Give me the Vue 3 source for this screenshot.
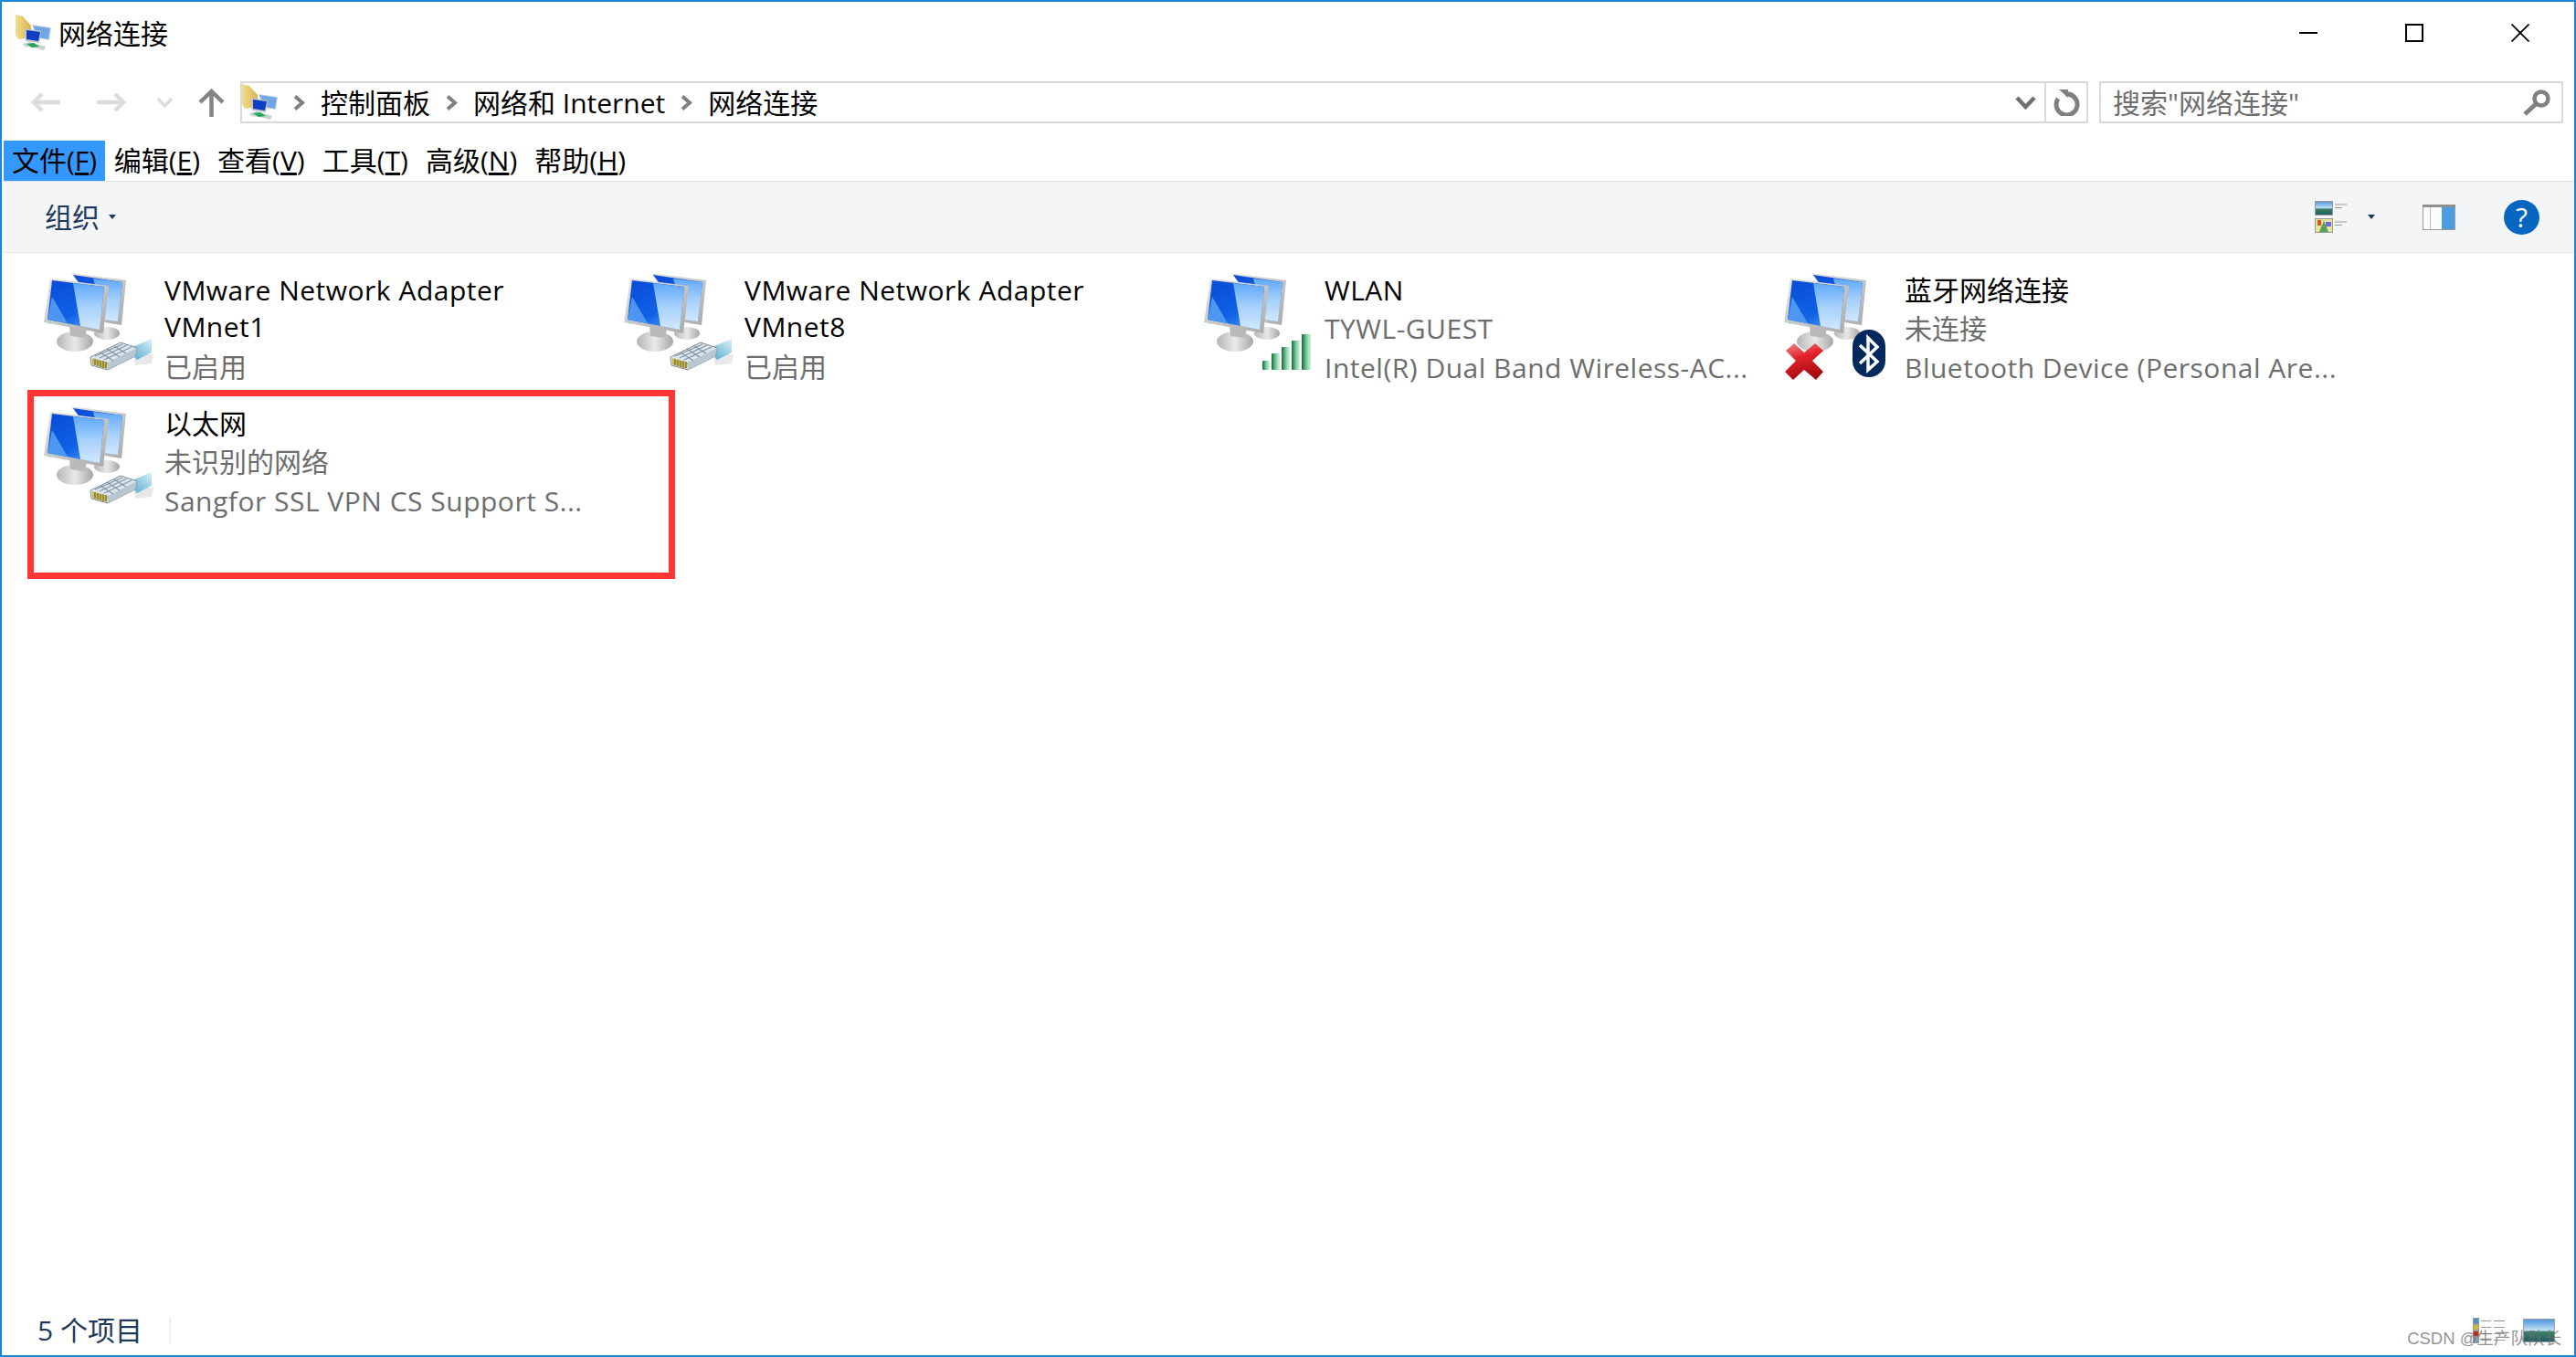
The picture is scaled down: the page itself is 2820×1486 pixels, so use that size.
<template>
  <div class="window">
    <!-- shared icon artwork -->
    <svg class="defs" width="0" height="0">
      <defs>
        <linearGradient id="screenBlue" x1="0" y1="0" x2="0.6" y2="1">
          <stop offset="0" stop-color="#0a4bd6" />
          <stop offset="0.7" stop-color="#0f62e6" />
          <stop offset="1" stop-color="#3f8ff0" />
        </linearGradient>
        <linearGradient id="glare" x1="0" y1="0" x2="0" y2="1">
          <stop offset="0" stop-color="#5fa8fb" />
          <stop offset="0.5" stop-color="#a5d0fb" />
          <stop offset="1" stop-color="#d2e8fd" />
        </linearGradient>
        <linearGradient id="frame" x1="0" y1="0" x2="1" y2="1">
          <stop offset="0" stop-color="#e6e6e6" />
          <stop offset="1" stop-color="#a9a9a9" />
        </linearGradient>
        <linearGradient id="base" x1="0" y1="0" x2="1" y2="0">
          <stop offset="0" stop-color="#b5b5b5" />
          <stop offset="0.5" stop-color="#e9e9e9" />
          <stop offset="1" stop-color="#a6a6a6" />
        </linearGradient>
        <linearGradient id="cable" x1="0" y1="1" x2="1" y2="0">
          <stop offset="0" stop-color="#4aa3c9" />
          <stop offset="1" stop-color="#d8f1fa" />
        </linearGradient>
        <linearGradient id="bar" x1="0" y1="0" x2="1" y2="0">
          <stop offset="0" stop-color="#116b37" />
          <stop offset="0.55" stop-color="#7fcf9d" />
          <stop offset="1" stop-color="#d7f2e0" />
        </linearGradient>
        <linearGradient id="cross" x1="0" y1="0" x2="0.3" y2="1">
          <stop offset="0" stop-color="#ec8a8a" />
          <stop offset="0.45" stop-color="#e3222a" />
          <stop offset="1" stop-color="#a80d12" />
        </linearGradient>
        <linearGradient id="folder" x1="0" y1="0" x2="1" y2="0">
          <stop offset="0" stop-color="#f4dc8c" />
          <stop offset="1" stop-color="#d8b454" />
        </linearGradient>
        <linearGradient id="sky" x1="0" y1="0" x2="0" y2="1">
          <stop offset="0" stop-color="#4b93df" />
          <stop offset="0.5" stop-color="#c5e3f6" />
          <stop offset="0.55" stop-color="#3f7d66" />
          <stop offset="1" stop-color="#1d5e63" />
        </linearGradient>
      </defs>

      <symbol id="monitors" viewBox="0 0 128 128">
        <ellipse cx="77" cy="75" rx="14" ry="7" fill="url(#base)" />
        <polygon points="38,9 98,17 93,66 80,64 75,63" fill="url(#frame)" />
        <polygon points="40,11 94,19 89,62 76,60" fill="url(#screenBlue)" />
        <polygon points="62,15 94,19 89,62 74,60" fill="url(#glare)" />
        <ellipse cx="42" cy="84" rx="20" ry="11" fill="url(#base)" />
        <polygon points="36,66 55,70 53,80 37,78" fill="#b9b9b9" />
        <polygon points="15,15 79,23 73,75 8,63" fill="url(#frame)" />
        <polygon points="17,17 74,24 69,71 12,60" fill="url(#screenBlue)" />
        <polygon points="40,20 74,24 69,71 48,67" fill="url(#glare)" />
        <polygon points="17,35 34,64 12,60" fill="#4d97f2" />
        <circle cx="14.500" cy="63.500" r="1" fill="#6fe08a" />
      </symbol>

      <symbol id="plug" viewBox="0 0 128 128">
        <polygon points="106,98 128,98 126,108 108,110" fill="#e8e8e8" />
        <polygon points="100,92 126,81 126,96 110,104" fill="url(#cable)" />
        <polygon points="59,101 92,85 110,91 108,100 78,115 60,110" fill="#dbe5ee" stroke="#7d8c98" stroke-width="1" />
        <polygon points="78,107 110,91 108,100 78,115" fill="#b9c7d3" />
        <path d="M64 100 L94 87 M69 102 L99 88 M74 104 L104 90 M70 96 L84 105 M77 92 L91 101 M85 89 L98 97" stroke="#8494a0" stroke-width="1.200" fill="none" />
        <polygon points="61,102 78,107 77,114 61,109" fill="#cdb84a" />
        <path d="M64 103 L64 110 M67 104 L67 111 M70 105 L70 112 M73 105 L73 113 M76 106 L76 113" stroke="#5f6244" stroke-width="1" />
      </symbol>

      <symbol id="bars" viewBox="0 0 128 128">
        <rect x="72" y="105" width="8" height="10" rx="1" fill="url(#bar)" />
        <rect x="82" y="97" width="9" height="18" rx="1" fill="url(#bar)" />
        <rect x="93" y="90" width="9" height="25" rx="1" fill="url(#bar)" />
        <rect x="104" y="83" width="9" height="32" rx="1" fill="url(#bar)" />
        <rect x="115" y="76" width="10" height="39" rx="1" fill="url(#bar)" />
      </symbol>

      <symbol id="bt" viewBox="0 0 128 128">
        <polygon points="10,94 19,86 30,96 42,86 51,94 39,105 51,117 43,126 30,115 18,126 9,117 21,105" fill="url(#cross)" />
        <rect x="83" y="71" width="36" height="52" rx="18" fill="#04295c" />
        <polyline points="91,88 110,106 100,115 100,80 110,90 91,108" fill="none" stroke="#fff" stroke-width="3.500" />
      </symbol>

      <symbol id="netfolder" viewBox="0 0 40 40">
        <polygon points="0,0 8,2 17,12 17,25 3,27 0,22" fill="url(#folder)" />
        <polygon points="18,11 39,14 37,28 24,26" fill="#cfd6de" />
        <polygon points="19,12 38,15 36,27 25,25" fill="#6fa6e6" />
        <polygon points="10,15 28,18 26,31 11,29" fill="#c4c4c4" />
        <polygon points="12,17 27,19 25,29 12,27" fill="#0d3fc4" />
        <polygon points="8,32 16,30 33,35 31,39 24,37 10,35" fill="#c9d2c9" />
        <polygon points="12,32 20,31 26,35 18,36" fill="#22a65a" />
      </symbol>
    </svg>

    <header class="titlebar">
      <svg class="small-icon" width="40" height="40"><use href="#netfolder" /></svg>
      <span class="title">网络连接</span>
      <div class="caption-btns">
        <svg width="20" height="20" viewBox="0 0 20 20"><path d="M0 10 H20" stroke="#000" stroke-width="2" /></svg>
        <svg width="20" height="20" viewBox="0 0 20 20"><rect x="1" y="1" width="18" height="18" fill="none" stroke="#000" stroke-width="2" /></svg>
        <svg width="20" height="20" viewBox="0 0 20 20"><path d="M0.500 0.500 L19.500 19.500 M19.500 0.500 L0.500 19.500" stroke="#000" stroke-width="1.800" /></svg>
      </div>
    </header>

    <div class="navrow">
      <div class="navbtns">
        <svg class="back" width="32" height="22" viewBox="0 0 32 22"><path d="M32 11 H4 M12 2 L3 11 L12 20" fill="none" stroke="#dcdcdc" stroke-width="4.500" /></svg>
        <svg class="forward" width="32" height="22" viewBox="0 0 32 22"><path d="M0 11 H28 M20 2 L29 11 L20 20" fill="none" stroke="#dcdcdc" stroke-width="4.500" /></svg>
        <svg class="recent" width="19" height="11" viewBox="0 0 19 11"><path d="M2 1 L9.500 9 L17 1" fill="none" stroke="#dcdcdc" stroke-width="3.500" /></svg>
        <svg class="up" width="29" height="31" viewBox="0 0 29 31"><path d="M14.500 31 V4 M2 15 L14.500 3 L27 15" fill="none" stroke="#848484" stroke-width="4.500" /></svg>
      </div>
      <div class="address">
        <svg width="40" height="40"><use href="#netfolder" /></svg>
        <template v-for="crumb in crumbs" :key="crumb">
          <svg width="13" height="17" viewBox="0 0 13 17"><path d="M2 1.500 L10 8.500 L2 15.500" fill="none" stroke="#808080" stroke-width="4" /></svg>
          <span class="crumb">{{ crumb }}</span>
        </template>
        <div class="addr-right">
          <svg width="23" height="15" viewBox="0 0 23 15"><path d="M2 2 L11.500 12 L21 2" fill="none" stroke="#707070" stroke-width="4.500" /></svg>
          <div class="refresh">
            <svg width="30" height="29" viewBox="0 0 30 29">
              <path d="M13 5 A11.500 11.500 0 1 1 5 10" fill="none" stroke="#808080" stroke-width="5" />
              <path d="M6 0 L16 0 L16 9 Z" fill="#808080" />
            </svg>
          </div>
        </div>
      </div>
      <div class="search">
        <span class="search-text">搜索"网络连接"</span>
        <svg width="31" height="29" viewBox="0 0 31 29">
          <circle cx="21" cy="10" r="7.500" fill="none" stroke="#808080" stroke-width="4.500" />
          <path d="M15 16 L3 27" stroke="#808080" stroke-width="5" />
        </svg>
      </div>
    </div>

    <nav class="menubar">
      <span v-for="(m, i) in menus" :key="m.label" class="menu-item" :class="{ active: i === 0 }">{{ m.label }}(<u>{{ m.key }}</u>)</span>
    </nav>

    <div class="toolbar">
      <span class="organize">组织</span>
      <i class="caret"></i>
      <div class="tools">
        <svg class="view-icon" width="35" height="35" viewBox="0 0 35 35">
          <rect x="0.500" y="0.500" width="19" height="15" fill="url(#sky)" stroke="#9a9a9a" />
          <rect x="0.500" y="19.500" width="19" height="15" fill="#e8e49a" stroke="#9a9a9a" />
          <polygon points="5,34 10,22 15,34" fill="#5aa05a" />
          <rect x="3" y="21" width="4" height="6" fill="#d6561f" />
          <rect x="12" y="23" width="6" height="5" fill="#6a6ad8" />
          <path d="M22 4 H35 M22 7.500 H30 M22 23 H35 M22 26.500 H30" stroke="#9a9a9a" stroke-width="1" />
        </svg>
        <i class="caret view-caret"></i>
        <svg class="pane-icon" width="36" height="28" viewBox="0 0 36 28">
          <rect x="0.500" y="0.500" width="35" height="27" fill="#fcfcfc" stroke="#9b9b9b" />
          <rect x="0" y="0" width="36" height="3" fill="#8e8e8e" />
          <rect x="21" y="3" width="14" height="24" fill="#4a9de2" />
          <path d="M8.500 3 V27" stroke="#bdbdbd" stroke-width="1" />
        </svg>
        <span class="help">?</span>
      </div>
    </div>

    <main class="content">
      <div class="grid">
        <div v-for="item in items" :key="item.name" class="item">
          <svg class="item-icon" width="128" height="128">
            <use href="#monitors" />
            <use :href="'#' + item.badge" />
          </svg>
          <div class="item-text" :class="{ wrapped: !item.device }">
            <div class="name" :class="{ latin: isLatin(item.name) }">{{ item.name }}</div>
            <div class="sub" :class="{ latin: isLatin(item.status) }">{{ item.status }}</div>
            <div v-if="item.device" class="sub latin">{{ item.device }}</div>
          </div>
        </div>
      </div>
      <div class="callout"></div>
    </main>

    <footer class="statusbar">
      <span class="count">5 个项目</span>
      <i class="sep"></i>
      <div class="status-icons">
        <svg width="35" height="29" viewBox="0 0 35 29">
          <rect x="0.500" y="0.500" width="6" height="6" fill="#4a93c8" stroke="#9a9a9a" />
          <rect x="0.500" y="7.500" width="6" height="6" fill="#d8b83a" stroke="#9a9a9a" />
          <rect x="0.500" y="14.500" width="6" height="6" fill="#c42a1a" stroke="#9a9a9a" />
          <rect x="0.500" y="21.500" width="6" height="6" fill="#7aa0c0" stroke="#9a9a9a" />
          <path d="M9 3.500 H20 M23 3.500 H35 M9 10.500 H20 M23 10.500 H35 M9 17.500 H20 M23 17.500 H35 M9 24.500 H20 M23 24.500 H35" stroke="#9a9a9a" stroke-width="1" />
        </svg>
        <svg width="35" height="26" viewBox="0 0 35 26">
          <rect x="0.500" y="0.500" width="34" height="25" fill="url(#sky)" stroke="#a0a0a0" />
        </svg>
      </div>
    </footer>

    <span class="watermark">CSDN @生产队队长</span>
  </div>
</template>

<script setup>
const crumbs = ['控制面板', '网络和 Internet', '网络连接']

const menus = [
  { label: '文件', key: 'F' },
  { label: '编辑', key: 'E' },
  { label: '查看', key: 'V' },
  { label: '工具', key: 'T' },
  { label: '高级', key: 'N' },
  { label: '帮助', key: 'H' },
]

const items = [
  { name: 'VMware Network Adapter VMnet1', status: '已启用', badge: 'plug' },
  { name: 'VMware Network Adapter VMnet8', status: '已启用', badge: 'plug' },
  { name: 'WLAN', status: 'TYWL-GUEST', device: 'Intel(R) Dual Band Wireless-AC...', badge: 'bars' },
  { name: '蓝牙网络连接', status: '未连接', device: 'Bluetooth Device (Personal Are...', badge: 'bt' },
  { name: '以太网', status: '未识别的网络', device: 'Sangfor SSL VPN CS Support S...', badge: 'plug' },
]

const isLatin = (text) => /^[\x20-\x7e]+$/.test(text)
</script>

<style scoped>
.window {
  position: relative;
  display: flex;
  flex-direction: column;
  box-sizing: border-box;
  width: 2820px;
  height: 1486px;
  overflow: hidden;
  border: 2px solid #1a86d8;
  background: #fff;
  color: #000;
  font-family: "Open Sans", "Noto Sans CJK SC", sans-serif;
  font-size: 30px;
}
.defs {
  position: absolute;
}
.titlebar {
  display: flex;
  align-items: center;
  height: 68px;
  padding-left: 15px;
}
.title {
  margin-left: 7px;
  padding-bottom: 3px;
}
.caption-btns {
  display: flex;
  gap: 96px;
  margin-left: auto;
  margin-right: 49px;
}
.navrow {
  display: flex;
  align-items: center;
  height: 46px;
  margin-top: 19px;
}
.navbtns {
  display: flex;
  align-items: center;
  width: 261px;
  flex: none;
}
.back {
  margin-left: 32px;
}
.forward {
  margin-left: 40px;
}
.recent {
  margin-left: 33px;
}
.up {
  margin-left: 27px;
}
.address {
  display: flex;
  align-items: center;
  flex: 1;
  gap: 17px;
  box-sizing: border-box;
  height: 46px;
  border: 2px solid #d9d9d9;
}
.address > svg:first-child {
  margin-right: -1px;
}
.crumb {
  padding-bottom: 3px;
  white-space: nowrap;
}
.addr-right {
  display: flex;
  align-items: center;
  align-self: stretch;
  margin-left: auto;
}
.refresh {
  display: flex;
  align-items: center;
  align-self: stretch;
  margin-left: 9px;
  padding: 0 6px 0 8px;
  border-left: 2px solid #d9d9d9;
}
.search {
  display: flex;
  align-items: center;
  justify-content: space-between;
  box-sizing: border-box;
  width: 508px;
  height: 46px;
  margin: 0 12px;
  padding: 0 12px 0 13px;
  border: 2px solid #d9d9d9;
  color: #6d6d6d;
}
.search-text {
  padding-bottom: 3px;
}
.menubar {
  display: flex;
  height: 44px;
  margin-top: 19px;
  padding-left: 2px;
  border-bottom: 1px solid #dfe2e5;
  line-height: 44px;
}
.menu-item {
  padding: 0 9.500px;
}
.menu-item.active {
  padding: 0 9px;
  background: #3399ff;
}
.toolbar {
  display: flex;
  align-items: center;
  height: 78px;
  flex: none;
  box-sizing: border-box;
  padding-left: 47px;
  border-bottom: 1px solid #e8eaec;
  background: #f4f5f7;
  color: #1e395b;
}
.organize {
  padding-bottom: 3px;
}
.caret {
  width: 0;
  height: 0;
  margin-left: 10px;
  border: 4px solid transparent;
  border-top: 5px solid #1e395b;
  border-bottom: 0;
}
.tools {
  display: flex;
  align-items: center;
  margin-left: auto;
  margin-right: 38px;
}
.view-caret {
  margin-left: 23px;
}
.pane-icon {
  margin-left: 52px;
}
.help {
  display: flex;
  align-items: center;
  justify-content: center;
  width: 39px;
  height: 38px;
  margin-left: 53px;
  border-radius: 50%;
  background: #0767c0;
  color: #fff;
  font-size: 30px;
}
.content {
  position: relative;
  flex: 1;
  padding-top: 13px;
}
.grid {
  display: grid;
  grid-template-columns: repeat(4, 635px);
  grid-auto-rows: 146px;
  margin-left: 38px;
}
.item {
  display: flex;
  gap: 12px;
}
.item-icon {
  flex: none;
}
.item-icon use {
  width: 128px;
  height: 128px;
}
.item-text {
  width: 470px;
  padding-top: 8px;
}
.name {
  line-height: 40px;
}
.sub {
  color: #6d6d6d;
  line-height: 43px;
  white-space: nowrap;
}
.latin {
  letter-spacing: 0.500px;
}
.wrapped .sub {
  margin-top: 2px;
}
.callout {
  position: absolute;
  left: 28px;
  top: 150px;
  box-sizing: border-box;
  width: 709px;
  height: 207px;
  border: 7px solid #ff3636;
}
.statusbar {
  display: flex;
  align-items: center;
  height: 54px;
  flex: none;
  padding-left: 39px;
  color: #1e395b;
}
.count {
  padding-bottom: 5px;
}
.sep {
  width: 2px;
  height: 28px;
  margin-left: 29px;
  background: #f0f0f0;
}
.status-icons {
  display: flex;
  align-items: center;
  gap: 20px;
  margin-left: auto;
  margin-right: 21px;
}
.watermark {
  position: absolute;
  right: 14px;
  bottom: 6px;
  color: rgba(110, 110, 110, 0.75);
  font-family: "Liberation Sans", "Noto Sans CJK SC", sans-serif;
  font-size: 18.500px;
  line-height: 24px;
}
</style>
